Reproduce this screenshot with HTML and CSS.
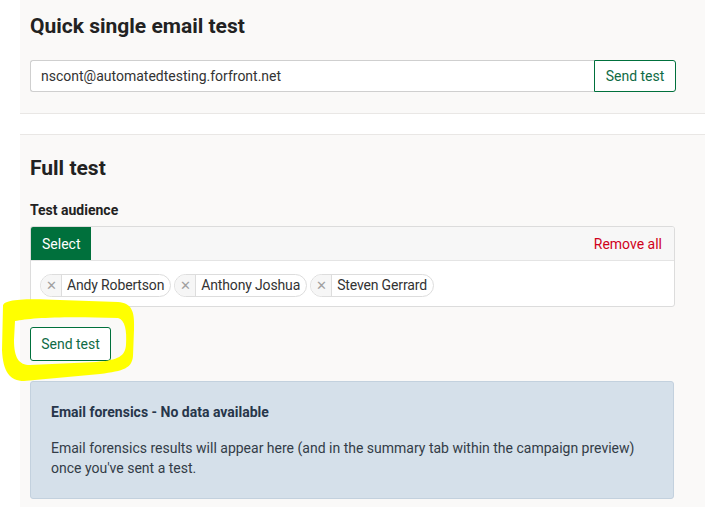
FILE: index.html
```html
<!DOCTYPE html>
<html lang="en">
<head>
<meta charset="utf-8">
<title>Test</title>
<link rel="stylesheet" href="styles.css">
</head>
<body>
<div class="page">
  <section class="panel panel-quick">
    <h2 class="title">Quick single email test</h2>
    <div class="input-row">
      <input class="email-input" type="text" value="nscont@automatedtesting.forfront.net">
      <button class="btn btn-attached">Send test</button>
    </div>
  </section>
  <div class="spacer"></div>
  <section class="panel panel-full">
    <h2 class="title">Full test</h2>
    <div class="label">Test audience</div>
    <div class="picker">
      <div class="picker-head">
        <button class="select-btn">Select</button>
        <a class="remove-all">Remove all</a>
      </div>
      <div class="picker-body">
        <span class="pill"><span class="pill-x">&#x2715;</span><span class="pill-text">Andy Robertson</span></span>
        <span class="pill"><span class="pill-x">&#x2715;</span><span class="pill-text">Anthony Joshua</span></span>
        <span class="pill"><span class="pill-x">&#x2715;</span><span class="pill-text">Steven Gerrard</span></span>
      </div>
    </div>
    <button class="btn btn-send">Send test</button>
    <div class="forensics">
      <div class="forensics-title">Email forensics - No data available</div>
      <p class="forensics-text">Email forensics results will appear here (and in the summary tab within the campaign preview) once you've sent a test.</p>
    </div>
  </section>
</div>
<svg class="highlight" width="705" height="507" viewBox="0 0 705 507">
  <path fill="#ffff00" fill-rule="evenodd" d="M 3 306 C 3 300, 20 298, 60 300 L 118 302 C 131 303, 135 310, 134 330 L 133 356 C 132 368, 124 371, 100 374 L 24 381 C 10 381, 3 372, 2 350 Z M 15 321 C 30 318, 60 316, 118 318 C 125 320, 127 330, 126 345 C 125 356, 119 360, 96 362 L 30 365 C 19 365, 14 358, 14 340 Z"/>
</svg>
</body>
</html>
```

FILE: styles.css
```css
html, body {
  margin: 0;
  padding: 0;
  background: #ffffff;
  font-family: Roboto, "Liberation Sans", Arial, sans-serif;
  color: #222222;
}

.page {
  padding-left: 20px;
}

.panel {
  background: #faf9f8;
  padding-left: 10px;
  padding-right: 29px;
}

.panel-quick {
  padding-top: 14px;
  padding-bottom: 21px;
  border-bottom: 1px solid #e9e7e5;
}

.spacer {
  height: 20px;
}

.panel-full {
  border-top: 1px solid #e9e7e5;
  padding-top: 21px;
  padding-bottom: 8px;
  padding-right: 30px;
}

.title {
  margin: 0;
  font-size: 21px;
  line-height: 24px;
  font-weight: 700;
  color: #222222;
}

.input-row {
  display: flex;
  margin-top: 22px;
  height: 32px;
}

.email-input {
  flex: 1;
  box-sizing: border-box;
  height: 32px;
  margin: 0;
  border: 1px solid #cfcfcf;
  border-right: none;
  border-radius: 3px 0 0 3px;
  padding: 0 10px;
  font-family: Roboto, "Liberation Sans", Arial, sans-serif;
  font-size: 14px;
  color: #333333;
  background: #ffffff;
  outline: none;
}

.btn {
  box-sizing: border-box;
  margin: 0;
  font-family: Roboto, "Liberation Sans", Arial, sans-serif;
  font-size: 14px;
  color: #0f6b45;
  background: #ffffff;
  border: 1px solid #00703c;
  cursor: pointer;
}

.btn-attached {
  width: 82px;
  height: 32px;
  padding: 0;
  border-radius: 0 3px 3px 0;
}

.label {
  margin-top: 20px;
  font-size: 14px;
  line-height: 20px;
  font-weight: 700;
  color: #222222;
}

.picker {
  margin-top: 6px;
  border: 1px solid #dcdcdc;
  border-radius: 3px;
  background: #ffffff;
  overflow: hidden;
}

.picker-head {
  display: flex;
  align-items: center;
  justify-content: space-between;
  height: 33px;
  background: #f7f7f7;
  border-bottom: 1px solid #e4e4e4;
}

.select-btn {
  box-sizing: border-box;
  width: 60px;
  height: 33px;
  margin: 0;
  padding: 0 0 0 11px;
  text-align: left;
  border: none;
  background: #00703c;
  color: #ffffff;
  font-family: Roboto, "Liberation Sans", Arial, sans-serif;
  font-size: 14px;
}

.remove-all {
  padding-right: 12px;
  font-size: 14px;
  color: #d0021b;
}

.picker-body {
  display: flex;
  gap: 3px;
  padding: 13px 9px 9px;
}

.pill {
  display: inline-flex;
  align-items: stretch;
  height: 23px;
  box-sizing: border-box;
  border: 1px solid #dddddd;
  border-radius: 12px;
  overflow: hidden;
  font-size: 14px;
  line-height: 21px;
}

.pill-x {
  width: 20px;
  text-align: center;
  background: #f6f6f6;
  border-right: 1px solid #dddddd;
  color: #a0a0a0;
  font-size: 13px;
}

.pill-text {
  padding: 0 6px 0 5px;
  color: #333333;
  letter-spacing: -0.15px;
}

.btn-send {
  display: block;
  margin-top: 20px;
  width: 81px;
  height: 34px;
  border-radius: 3px;
  padding: 0;
}

.forensics {
  margin-top: 20px;
  background: #d5e0ea;
  border: 1px solid #c3d1de;
  border-radius: 3px;
  padding: 20px 20px 20px;
  margin-right: 1px;
}

.forensics-title {
  font-size: 14px;
  line-height: 20px;
  font-weight: 700;
  color: #27364a;
}

.forensics-text {
  margin: 16px 0 0;
  font-size: 14px;
  line-height: 20px;
  color: #333c47;
}

.highlight {
  position: absolute;
  left: 0;
  top: 0;
  pointer-events: none;
}
```
